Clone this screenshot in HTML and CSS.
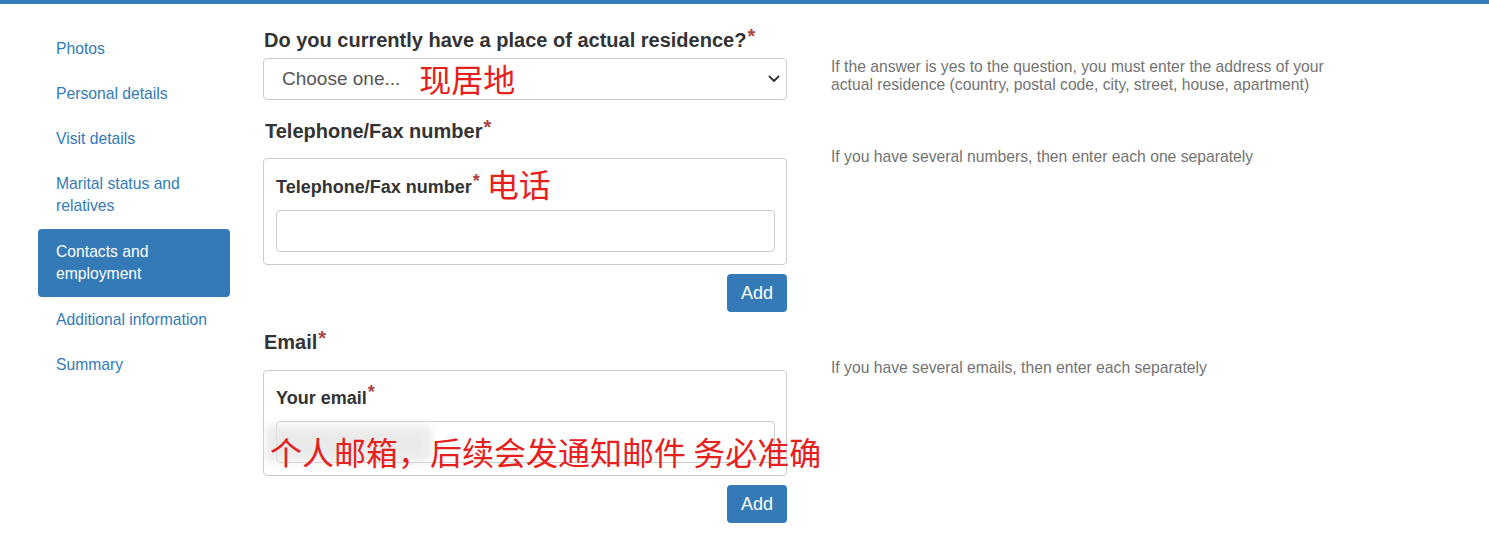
FILE: index.html
```html
<!DOCTYPE html>
<html lang="en">
<head>
<meta charset="utf-8">
<title>Contacts and employment</title>
<link rel="stylesheet" href="styles.css">
</head>
<body>
<div class="topbar"></div>
<div class="page">
  <nav class="sidebar">
    <a class="nav-item" href="#">Photos</a>
    <a class="nav-item" href="#">Personal details</a>
    <a class="nav-item" href="#">Visit details</a>
    <a class="nav-item" href="#">Marital status and relatives</a>
    <a class="nav-item active" href="#">Contacts and employment</a>
    <a class="nav-item" href="#">Additional information</a>
    <a class="nav-item" href="#">Summary</a>
  </nav>
  <main class="content">
    <section class="row row-residence">
      <div class="field">
        <div class="label label-residence">Do you currently have a place of actual residence?<span class="req">*</span></div>
        <div class="select">
          <span class="select-text">Choose one...</span>
          <span class="note note-inline">现居地</span>
          <span class="spacer"></span>
          <svg class="chevron" width="12" height="8" viewBox="0 0 12 8"><path d="M1.5 1.5 L6 6 L10.5 1.5" fill="none" stroke="#333" stroke-width="1.8" stroke-linecap="round" stroke-linejoin="round"/></svg>
        </div>
      </div>
      <p class="help help-residence">If the answer is yes to the question, you must enter the address of your actual residence (country, postal code, city, street, house, apartment)</p>
    </section>

    <section class="row row-phone">
      <div class="field">
        <div class="label label-group">Telephone/Fax number<span class="req">*</span></div>
        <div class="panel panel-phone">
          <div class="sublabel">Telephone/Fax number<span class="req">*</span><span class="note note-label">电话</span></div>
          <div class="input"></div>
        </div>
        <div class="actions"><button class="btn">Add</button></div>
      </div>
      <p class="help help-group">If you have several numbers, then enter each one separately</p>
    </section>

    <section class="row row-email">
      <div class="field">
        <div class="label label-group label-email">Email<span class="req">*</span></div>
        <div class="panel panel-email">
          <div class="sublabel">Your email<span class="req">*</span></div>
          <div class="input"></div>
          <div class="blur"></div>
          <div class="note note-email">个人邮箱，后续会发通知邮件 务必准确</div>
        </div>
        <div class="actions"><button class="btn">Add</button></div>
      </div>
      <p class="help help-group">If you have several emails, then enter each separately</p>
    </section>
  </main>
</div>
</body>
</html>
```

FILE: styles.css
```css
* { box-sizing: border-box; }

html, body {
  margin: 0;
  padding: 0;
  background: #fff;
  font-family: "Liberation Sans", Arial, "Noto Sans CJK SC", sans-serif;
  color: #333;
}

.topbar {
  height: 4px;
  background: #337ab7;
}

.page {
  display: flex;
  align-items: flex-start;
  padding-left: 38px;
}

/* Sidebar */
.sidebar {
  width: 192px;
  margin-top: 23px;
  display: flex;
  flex-direction: column;
  gap: 1px;
}

.nav-item {
  display: block;
  padding: 11px 18px;
  font-size: 15.7px;
  line-height: 22px;
  color: #337ab7;
  text-decoration: none;
  border-radius: 4px;
}

.nav-item.active {
  background: #337ab7;
  color: #fff;
  padding-top: 12px;
  padding-bottom: 12px;
}

/* Content */
.content {
  margin-left: 33px;
  display: flex;
  flex-direction: column;
}

.row {
  display: grid;
  grid-template-columns: 524px 540px;
  column-gap: 44px;
  align-items: start;
}

.row-residence { margin-top: 25px; }
.row-phone { margin-top: 20px; }
.row-email { margin-top: 19px; }

.label {
  font-size: 20px;
  line-height: 22px;
  font-weight: bold;
  color: #333;
  padding-left: 1px;
}

.label-residence { margin-bottom: 7px; }
.label-group { margin-bottom: 16px; padding-left: 2px; }
.label-email { margin-bottom: 17px; padding-left: 1px; }

.req {
  color: #a94442;
  font-size: 1em;
  vertical-align: top;
  position: relative;
  top: -4px;
  margin-left: 1px;
}

.select {
  height: 42px;
  border: 1px solid #ccc;
  border-radius: 4px;
  display: flex;
  align-items: center;
  padding: 0 6px 0 18px;
}

.select-text {
  font-size: 19px;
  color: #555;
}

.spacer { flex: 1; }

.chevron { display: block; }

.note {
  color: #e5201d;
  font-family: "Noto Sans CJK SC", sans-serif;
  font-weight: normal;
}

.note-inline {
  font-size: 32px;
  line-height: 40px;
  margin-left: 19px;
  margin-top: -2px;
}

.panel {
  position: relative;
  border: 1px solid #ccc;
  border-radius: 4px;
  padding: 17px 11px 12px 12px;
}

.panel-phone { padding-top: 18px; }

.sublabel {
  display: flex;
  align-items: center;
  height: 20px;
  font-size: 18px;
  line-height: 20px;
  font-weight: bold;
  color: #333;
  margin-bottom: 13px;
}

.sublabel .req { align-self: flex-start; top: -6px; }

.note-label {
  font-size: 32px;
  line-height: 20px;
  margin-left: 7px;
  margin-top: -8px;
}

.input {
  height: 42px;
  border: 1px solid #ccc;
  border-radius: 4px;
}

.actions {
  display: flex;
  justify-content: flex-end;
  margin-top: 9px;
}

.btn {
  width: 60px;
  height: 38px;
  border: 0;
  border-radius: 4px;
  background: #337ab7;
  color: #fff;
  font-family: "Liberation Sans", Arial, sans-serif;
  font-size: 18px;
  padding: 0;
}

.help {
  margin: 0;
  font-size: 15.7px;
  line-height: 18px;
  color: #737373;
  max-width: 510px;
}

.help-residence { padding-top: 29px; }
.help-group { padding-top: 28px; }

.blur {
  position: absolute;
  left: 2px;
  top: 55px;
  width: 165px;
  height: 36px;
  background: #e6e6e6;
  filter: blur(4px);
  opacity: 0.8;
}

.note-email {
  position: absolute;
  left: 6px;
  top: 59px;
  font-size: 32px;
  line-height: 42px;
  white-space: nowrap;
}
```
